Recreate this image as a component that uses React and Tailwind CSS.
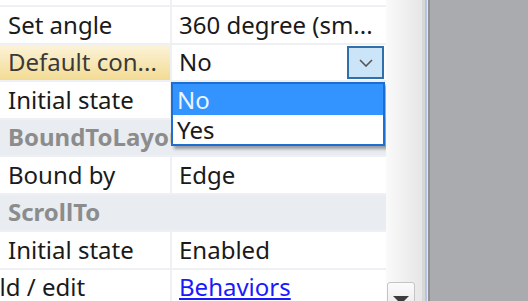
import React from 'react';

const font = { fontFamily: '"Noto Sans", "Liberation Sans", sans-serif' };

function Row({ name, value, highlight, link, nameClass = '' }) {
  return (
    <div className="flex h-[37.5px] shrink-0 border-b-2 border-[#eef0f3] bg-white">
      <div
        className={`w-[170px] shrink-0 overflow-hidden whitespace-nowrap pl-2 flex items-center ${
          highlight ? 'bg-gradient-to-b from-[#fcf3d8] to-[#f3db93] text-[#3a3a3a]' : 'text-[#1a1a1a]'
        }`}
      >
        <span className={nameClass}>{name}</span>
      </div>
      <div className="flex-1 border-l-2 border-[#eef0f3] pl-[7px] flex items-center whitespace-nowrap overflow-hidden text-[#1a1a1a]">
        {link ? <span className="text-[#1a1aff] underline underline-offset-2">{value}</span> : value}
      </div>
    </div>
  );
}

function Category({ title }) {
  return (
    <div className="flex h-[37.5px] shrink-0 items-center border-b-2 border-[#eef0f3] bg-[#e9ecf1] pl-2 font-bold text-[#8c8c8c] whitespace-nowrap overflow-hidden">
      {title}
    </div>
  );
}

export default function App() {
  return (
    <div className="relative flex h-[301px] w-[528px] overflow-hidden text-[24px] leading-none" style={font}>
      {/* property grid */}
      <div className="relative w-[386px] shrink-0 flex flex-col bg-white">
        <div className="h-[7px] shrink-0 border-b-2 border-[#eef0f3] flex">
          <div className="w-[170px]" />
          <div className="flex-1 border-l-2 border-[#eef0f3]" />
        </div>
        <Row name="Set angle" value="360 degree (sm..." />
        <Row name="Default con..." value="No" highlight />
        <Row name="Initial state" value="" />
        <Category title="BoundToLayout" />
        <Row name="Bound by" value="Edge" />
        <Category title="ScrollTo" />
        <Row name="Initial state" value="Enabled" />
        <Row name="Build / edit" value="Behaviors" link nameClass="-ml-[45px]" />

        {/* combobox button */}
        <div className="absolute left-[347px] top-[46px] flex h-[33px] w-[37px] items-center justify-center border-2 border-[#2f6faa] bg-[#cce4f7]">
          <svg width="14" height="8" viewBox="0 0 14 8">
            <path d="M1 1 L7 7 L13 1" fill="none" stroke="#555" strokeWidth="1.6" />
          </svg>
        </div>

        {/* dropdown list */}
        <div className="absolute left-[171px] top-[82px] w-[214px] border-2 border-[#1c6fd1] bg-white shadow-[3px_3px_3px_rgba(0,0,0,0.35)]">
          <div className="flex h-[31px] items-center bg-[#3393ff] pl-[4px] text-[#eef4ff]">No</div>
          <div className="flex h-[29px] items-center pl-[4px] text-[#1a1a1a]">Yes</div>
        </div>
      </div>

      {/* scrollbar */}
      <div className="relative w-[36px] shrink-0 bg-gradient-to-r from-[#fafafa] to-[#e6e6e6]">
        <div className="absolute left-[1px] top-[282px] flex h-[24px] w-[28px] justify-center rounded-t-[3px] border border-[#c4c4c4] bg-gradient-to-b from-[#fbfbfb] to-[#ececec] pt-[13px]">
          <svg width="16" height="8" viewBox="0 0 16 8">
            <path d="M0 0 L16 0 L8 8 Z" fill="#3c3c3c" />
          </svg>
        </div>
      </div>
      <div className="w-[3px] shrink-0 bg-[#d6d6d6]" />
      <div className="w-[2px] shrink-0 bg-[#b6c6e0]" />
      <div className="w-[1px] shrink-0 bg-[#e4e8ee]" />
      <div className="w-[2px] shrink-0 bg-[#8e9094]" />
      <div className="flex-1 bg-[#a9abaf]" />
    </div>
  );
}
